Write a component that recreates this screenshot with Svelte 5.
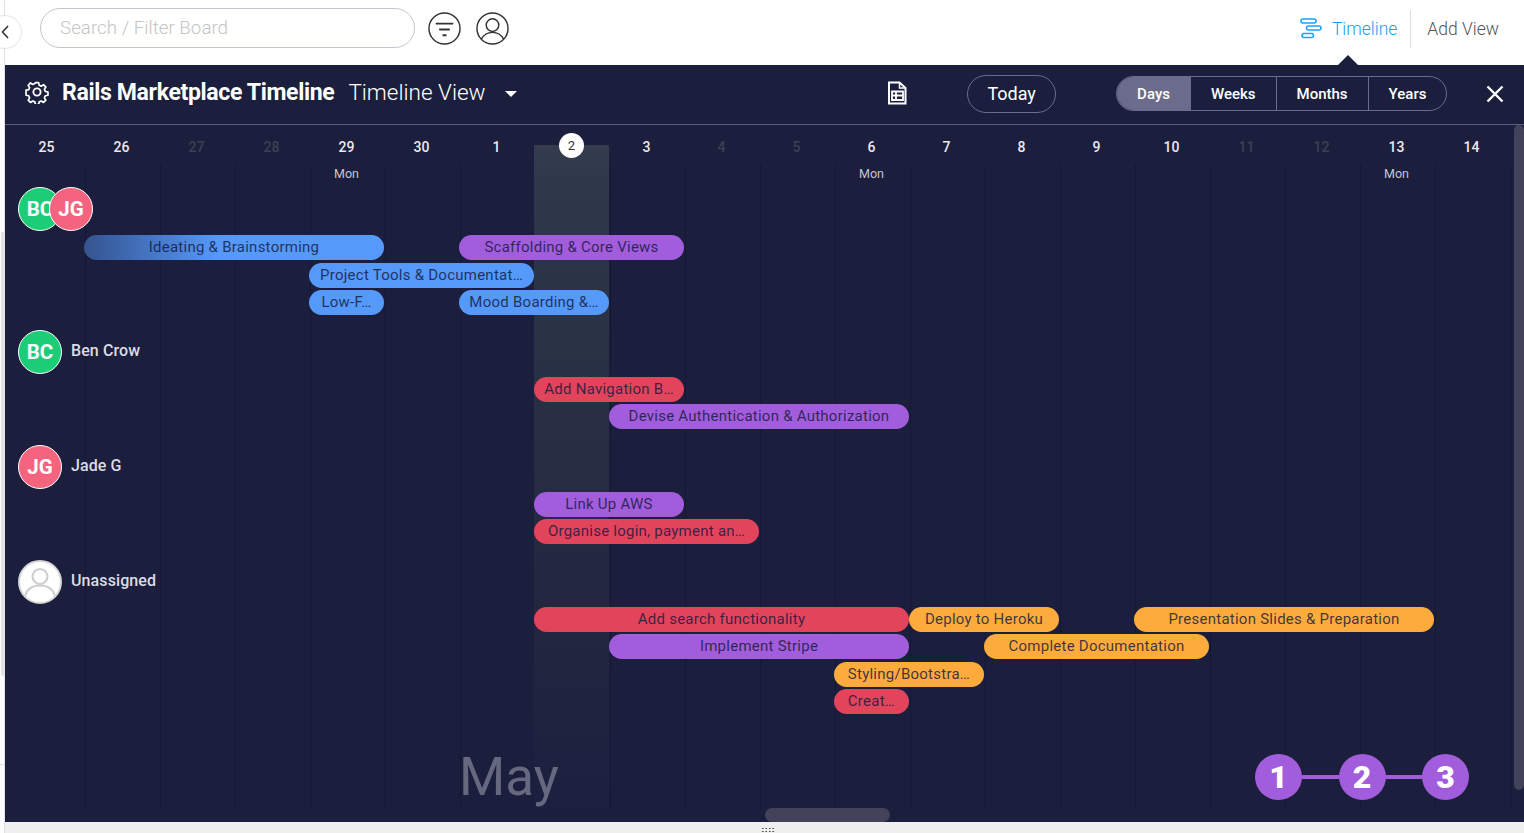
<script lang="ts">
  const dayW = 75;
  const days = [
    { n: 25 }, { n: 26 }, { n: 27, off: true }, { n: 28, off: true }, { n: 29, mon: true },
    { n: 30 }, { n: 1 }, { n: 2, today: true }, { n: 3 }, { n: 4, off: true },
    { n: 5, off: true }, { n: 6, mon: true }, { n: 7 }, { n: 8 }, { n: 9 },
    { n: 10 }, { n: 11, off: true }, { n: 12, off: true }, { n: 13, mon: true }, { n: 14 }
  ];

  // start / span are in days, from the 25th
  const groups = [
    {
      name: "",
      avatars: [{ t: "BC", c: "green" }, { t: "JG", c: "pink" }],
      lanes: [
        [
          { t: "Ideating & Brainstorming", start: 1, span: 4, c: "blue fade" },
          { t: "Scaffolding & Core Views", start: 6, span: 3, c: "purple" }
        ],
        [{ t: "Project Tools & Documentat…", start: 4, span: 3, c: "blue" }],
        [
          { t: "Low-F…", start: 4, span: 1, c: "blue" },
          { t: "Mood Boarding &…", start: 6, span: 2, c: "blue" }
        ]
      ]
    },
    {
      name: "Ben Crow",
      avatars: [{ t: "BC", c: "green" }],
      lanes: [
        [{ t: "Add Navigation B…", start: 7, span: 2, c: "red" }],
        [{ t: "Devise Authentication & Authorization", start: 8, span: 4, c: "purple" }]
      ]
    },
    {
      name: "Jade G",
      avatars: [{ t: "JG", c: "pink" }],
      lanes: [
        [{ t: "Link Up AWS", start: 7, span: 2, c: "purple" }],
        [{ t: "Organise login, payment an…", start: 7, span: 3, c: "red" }]
      ]
    },
    {
      name: "Unassigned",
      avatars: [{ t: "", c: "none" }],
      lanes: [
        [
          { t: "Add search functionality", start: 7, span: 5, c: "red" },
          { t: "Deploy to Heroku", start: 12, span: 2, c: "orange" },
          { t: "Presentation Slides & Preparation", start: 15, span: 4, c: "orange" }
        ],
        [
          { t: "Implement Stripe", start: 8, span: 4, c: "purple" },
          { t: "Complete Documentation", start: 13, span: 3, c: "orange" }
        ],
        [{ t: "Styling/Bootstra…", start: 11, span: 2, c: "orange" }],
        [{ t: "Creat…", start: 11, span: 1, c: "red" }]
      ]
    }
  ];
</script>

<div class="page">
  <div class="rail">
    <button class="collapse" aria-label="Collapse">
      <svg width="8" height="14" viewBox="0 0 8 14"><path d="M7 1 1.5 7 7 13" fill="none" stroke="#333" stroke-width="1.6"/></svg>
    </button>
    <div class="rail-scroll"></div>
    <div class="rail-tick"></div>
  </div>

  <div class="main">
    <header class="topbar">
      <div class="search">Search / Filter Board</div>
      <svg class="round-icon" viewBox="0 0 34 34">
        <circle cx="17" cy="17" r="16" />
        <path d="M8 12h18M11.5 18h11M15 24h4" stroke-width="2" />
      </svg>
      <svg class="round-icon" viewBox="0 0 34 34">
        <circle cx="17" cy="17" r="16" />
        <circle cx="17" cy="13.5" r="6.5" />
        <path d="M5.5 28C8 23.500 12 21 17 21s9 2.500 11.500 7" />
      </svg>
      <div class="views">
        <div class="view active">
          <svg width="22" height="22" viewBox="0 0 22 22" fill="none" stroke="#1aa3ff" stroke-width="1.6">
            <rect x="1" y="1" width="15" height="4" rx="2" />
            <rect x="6.500" y="8" width="14.500" height="4" rx="2" />
            <rect x="2" y="15.500" width="11.500" height="4" rx="2" />
          </svg>
          <span>Timeline</span>
          <i class="notch"></i>
        </div>
        <div class="view add">Add View</div>
      </div>
    </header>

    <section class="panel">
      <div class="panel-head">
        <svg class="gear" width="24" height="24" viewBox="0 0 24 24" fill="none" stroke="#fff" stroke-width="1.9" stroke-linejoin="round">
          <circle cx="12" cy="12" r="3.6" />
          <path d="M10.2 1.6h3.6l.6 3 2.3 1 2.6-1.7 2.500 2.6-1.6 2.6 1 2.3 3 .6v3.6l-3 .6-1 2.3 1.6 2.6-2.500 2.500-2.6-1.6-2.3 1-.6 3h-3.6l-.6-3-2.3-1-2.6 1.6-2.500-2.500 1.6-2.6-1-2.3-3-.6V10l3-.6 1-2.3-1.6-2.6 2.500-2.6 2.6 1.7 2.3-1z" transform="translate(1.2 1.2) scale(.9)" />
        </svg>
        <h1>Rails Marketplace Timeline</h1>
        <span class="view-name">Timeline View</span>
        <i class="caret"></i>
        <svg class="sheet" width="20" height="24" viewBox="0 0 20 24" fill="none" stroke="#fff" stroke-width="2">
          <path d="M2 1.500h10.500L18.500 7v15.500H2z" />
          <path d="M12.500 1.500V7h6" stroke-width="1.500" />
          <path d="M5 10.500h11v8.500H5zM5 14.500h11M9 10.500v8.500" stroke-width="1.800" />
        </svg>
        <button class="today">Today</button>
        <div class="scale">
          <button class="sel">Days</button>
          <button>Weeks</button>
          <button>Months</button>
          <button>Years</button>
        </div>
        <svg class="close" width="18" height="18" viewBox="0 0 18 18"><path d="M1.500 1.500l15 15M16.500 1.500l-15 15" stroke="#fff" stroke-width="2.400" /></svg>
      </div>

      <div class="board">
        <div class="columns">
          {#each days as d}
            <div class="col" class:today-col={d.today}></div>
          {/each}
        </div>

        <div class="dates">
          {#each days as d}
            <div class="date" class:off={d.off}>
              <span class:today-num={d.today}>{d.n}</span>
              {#if d.mon}<small>Mon</small>{/if}
            </div>
          {/each}
        </div>

        {#each groups as g}
          <div class="group" class:lead={!g.name}>
            <div class="who">
              <div class="stack">
                {#each g.avatars as a}
                  <div class="avatar {a.c}">
                    {#if a.c === "none"}
                      <svg width="40" height="40" viewBox="0 0 40 40" fill="none" stroke="#cfcfcf" stroke-width="2.200">
                        <circle cx="20" cy="14.500" r="7.500" />
                        <path d="M5 34c2-7 8-10.500 15-10.500S33 27 35 34" />
                      </svg>
                    {:else}
                      {a.t}
                    {/if}
                  </div>
                {/each}
              </div>
              {#if g.name}<span class="name">{g.name}</span>{/if}
            </div>
            {#each g.lanes as lane}
              <div class="lane">
                {#each lane as b}
                  <div class="bar {b.c}" style="left: {b.start * dayW}px; width: {b.span * dayW}px">{b.t}</div>
                {/each}
              </div>
            {/each}
          </div>
        {/each}

        <div class="month">May</div>

        <div class="steps">
          <b>1</b><i></i><b>2</b><i></i><b>3</b>
        </div>

        <div class="vscroll"></div>
        <div class="hscroll"></div>
      </div>
    </section>

    <footer class="foot"><span class="grip"></span></footer>
  </div>
</div>

<style>
  :global(body) {
    margin: 0;
    background: #fff;
    overflow: hidden;
  }

  .page {
    display: flex;
    width: 1524px;
    height: 833px;
    font-family: Roboto, "Liberation Sans", sans-serif;
    overflow: hidden;
  }

  .rail {
    position: relative;
    width: 5px;
    flex: none;
    box-sizing: border-box;
    border-right: 1px solid #e0e0e0;
  }

  .collapse {
    position: absolute;
    left: -12px;
    top: 15px;
    width: 34px;
    height: 34px;
    padding: 0;
    border: 1px solid #e6e6e6;
    border-radius: 50%;
    background: #fff;
    display: flex;
    align-items: center;
    justify-content: center;
    z-index: 2;
  }

  .rail-scroll {
    position: absolute;
    left: 1px;
    top: 232px;
    width: 4px;
    height: 444px;
    border-radius: 0 0 2px 2px;
    background: #e3e3e3;
  }

  .rail-tick {
    position: absolute;
    left: 0;
    top: 764px;
    width: 4px;
    height: 1px;
    background: #dedede;
  }

  .main {
    flex: 1;
    min-width: 0;
    display: flex;
    flex-direction: column;
  }

  .topbar {
    height: 65px;
    flex: none;
    display: flex;
    align-items: center;
    box-sizing: border-box;
    padding: 0 0 9px 35px;
    gap: 13px;
  }

  .search {
    width: 375px;
    height: 40px;
    box-sizing: border-box;
    padding-left: 19px;
    border: 1px solid #c5c7d0;
    border-radius: 20px;
    color: #c4c4c4;
    font-size: 18.800px;
    line-height: 38px;
    font-weight: 300;
  }

  .round-icon {
    width: 33px;
    height: 33px;
    fill: none;
    stroke: #333;
    stroke-width: 1.500;
    flex: none;
  }

  .round-icon + .round-icon {
    margin-left: 2px;
  }

  .views {
    margin-left: auto;
    margin-top: 2px;
    display: flex;
    align-items: center;
    height: 38px;
    padding-right: 25px;
  }

  .view {
    font-size: 17.500px;
    font-weight: 300;
    line-height: 38px;
  }

  .view.active {
    position: relative;
    display: flex;
    align-items: center;
    gap: 10px;
    color: #1d9bf5;
    padding-right: 13px;
    border-right: 1px solid #dcdcdc;
  }

  .notch {
    position: absolute;
    left: 38px;
    bottom: -17px;
    width: 0;
    height: 0;
    border-left: 10px solid transparent;
    border-right: 10px solid transparent;
    border-bottom: 10px solid #1b1f3d;
  }

  .view.add {
    color: #555;
    padding-left: 16px;
  }

  .panel {
    flex: none;
    height: 757px;
    display: flex;
    flex-direction: column;
    background: #1b1f3d;
    color: #fff;
  }

  .panel-head {
    height: 60px;
    flex: none;
    display: flex;
    align-items: center;
    box-sizing: border-box;
    padding: 0 0 2px 20px;
    border-bottom: 1px solid #5c5c7f;
  }

  .gear {
    flex: none;
    margin-bottom: 3px;
  }

  h1 {
    margin: 0 0 3px 13px;
    font-size: 23.050px;
    font-weight: 700;
    letter-spacing: -0.350px;
    white-space: nowrap;
  }

  .view-name {
    margin: 0 0 3px 14px;
    font-size: 22.500px;
    font-weight: 300;
    white-space: nowrap;
  }

  .caret {
    margin-left: 19px;
    margin-top: 1px;
    border-left: 6px solid transparent;
    border-right: 6px solid transparent;
    border-top: 6px solid #fff;
  }

  .sheet {
    margin-left: 370.500px;
    margin-bottom: 2px;
    flex: none;
  }

  .today {
    margin-left: 60px;
    width: 89px;
    height: 38px;
    padding: 0;
    background: none;
    border: 1px solid #6b6b8c;
    border-radius: 19px;
    color: #fff;
    font: 400 18px Roboto, sans-serif;
  }

  .scale {
    margin-left: 60px;
    display: flex;
    height: 35px;
    box-sizing: border-box;
    border: 1px solid #6b6b8c;
    border-radius: 18px;
    overflow: hidden;
  }

  .scale button {
    padding: 0 20px;
    background: none;
    border: 0;
    border-left: 1px solid #6b6b8c;
    color: #fff;
    font: 500 15px Roboto, sans-serif;
  }

  .scale button:first-child {
    border-left: 0;
  }

  .scale .sel {
    background: #6b6b8c;
  }

  .close {
    margin-left: 39px;
    flex: none;
  }

  .board {
    position: relative;
    flex: 1;
    min-height: 0;
    overflow: hidden;
    padding-left: 4px;
  }

  .columns {
    position: absolute;
    left: 6px;
    top: 40px;
    bottom: 12px;
    display: flex;
  }

  .col {
    position: relative;
    width: 75px;
    box-sizing: border-box;
    border-right: 1px solid #151834;
  }

  .today-col::before {
    content: "";
    position: absolute;
    left: -2px;
    right: 1px;
    top: -20px;
    bottom: 0;
    background: linear-gradient(#343c4d, #2e3849 6%, #22263f 72%, #1c2040);
  }

  .dates {
    position: relative;
    display: flex;
    height: 62px;
  }

  .date {
    width: 75px;
    flex: none;
    display: flex;
    flex-direction: column;
    align-items: center;
    padding-top: 14px;
    box-sizing: border-box;
    font-size: 14px;
    font-weight: 500;
    color: #e9e9ef;
    line-height: 17px;
  }

  .date.off {
    color: #3d3f52;
  }

  .date small {
    margin-top: 10px;
    font-size: 12.500px;
    font-weight: 400;
    color: #c5c5d0;
    line-height: 15px;
  }

  .today-num {
    width: 25px;
    height: 25px;
    margin-top: -6px;
    margin-bottom: -2px;
    border-radius: 50%;
    background: #fff;
    color: #333;
    font-size: 13px;
    font-weight: 400;
    line-height: 25px;
    text-align: center;
  }

  .group {
    position: relative;
    margin-bottom: 13px;
  }

  .group.lead {
    margin-bottom: 12px;
  }

  .who {
    display: flex;
    align-items: center;
    height: 44px;
    margin: 0 0 3px 9px;
    gap: 9px;
  }

  .lead .who {
    margin-bottom: 4px;
  }

  .stack {
    display: flex;
  }

  .avatar {
    width: 44px;
    height: 44px;
    box-sizing: border-box;
    border: 1px solid #fff;
    border-radius: 50%;
    font-size: 20.500px;
    font-weight: 700;
    line-height: 42px;
    text-align: center;
    position: relative;
    overflow: hidden;
  }

  .avatar + .avatar {
    margin-left: -13px;
  }

  .green {
    background: #1ccc76;
  }

  .pink {
    background: #f5647f;
  }

  .avatar.none {
    background: #fff;
    border: 2px solid #d5d5d5;
    line-height: 0;
  }

  .avatar.none svg {
    display: block;
  }

  .name {
    margin-bottom: 2px;
    font-size: 16px;
    font-weight: 500;
    color: #dcdce4;
    letter-spacing: 0.100px;
    white-space: nowrap;
  }

  .lane {
    position: relative;
    height: 27.500px;
  }

  .bar {
    position: absolute;
    top: 0;
    height: 25px;
    box-sizing: border-box;
    border-radius: 12.500px;
    font-size: 15px;
    line-height: 25px;
    text-align: center;
    white-space: nowrap;
    color: rgba(20, 24, 60, 0.82);
    letter-spacing: 0.250px;
  }

  .blue {
    background: #5599fb;
  }

  .blue.fade {
    background: linear-gradient(90deg, #35538f, #5599fb 45%);
  }

  .purple {
    background: #a25ddc;
  }

  .red {
    background: #e2445c;
  }

  .orange {
    background: #fdab3d;
  }

  .month {
    position: absolute;
    left: 454px;
    top: 619px;
    font-size: 53px;
    line-height: 66px;
    color: #66687f;
  }

  .steps {
    position: absolute;
    left: 1250px;
    top: 629px;
    display: flex;
    align-items: center;
  }

  .steps b {
    width: 47px;
    height: 46px;
    border-radius: 50%;
    background: #a25ddc;
    color: #fff;
    font-size: 32px;
    font-weight: 900;
    line-height: 46px;
    text-align: center;
  }

  .steps i {
    width: 36.500px;
    height: 4px;
    background: #a25ddc;
  }

  .vscroll {
    position: absolute;
    left: 1509px;
    top: 0;
    width: 10px;
    height: 665px;
    border-radius: 5px;
    background: #42435a;
  }

  .hscroll {
    position: absolute;
    left: 760px;
    bottom: 0;
    width: 125px;
    height: 14px;
    border-radius: 7px;
    background: #42435a;
  }

  .foot {
    flex: 1;
    background: #f0f0f0;
    display: flex;
    justify-content: center;
  }

  .grip {
    width: 14px;
    height: 6px;
    margin: 5px 0 0 7px;
    background-image: radial-gradient(circle, #555 0.8px, transparent 1px);
    background-size: 3.500px 3px;
  }
</style>
